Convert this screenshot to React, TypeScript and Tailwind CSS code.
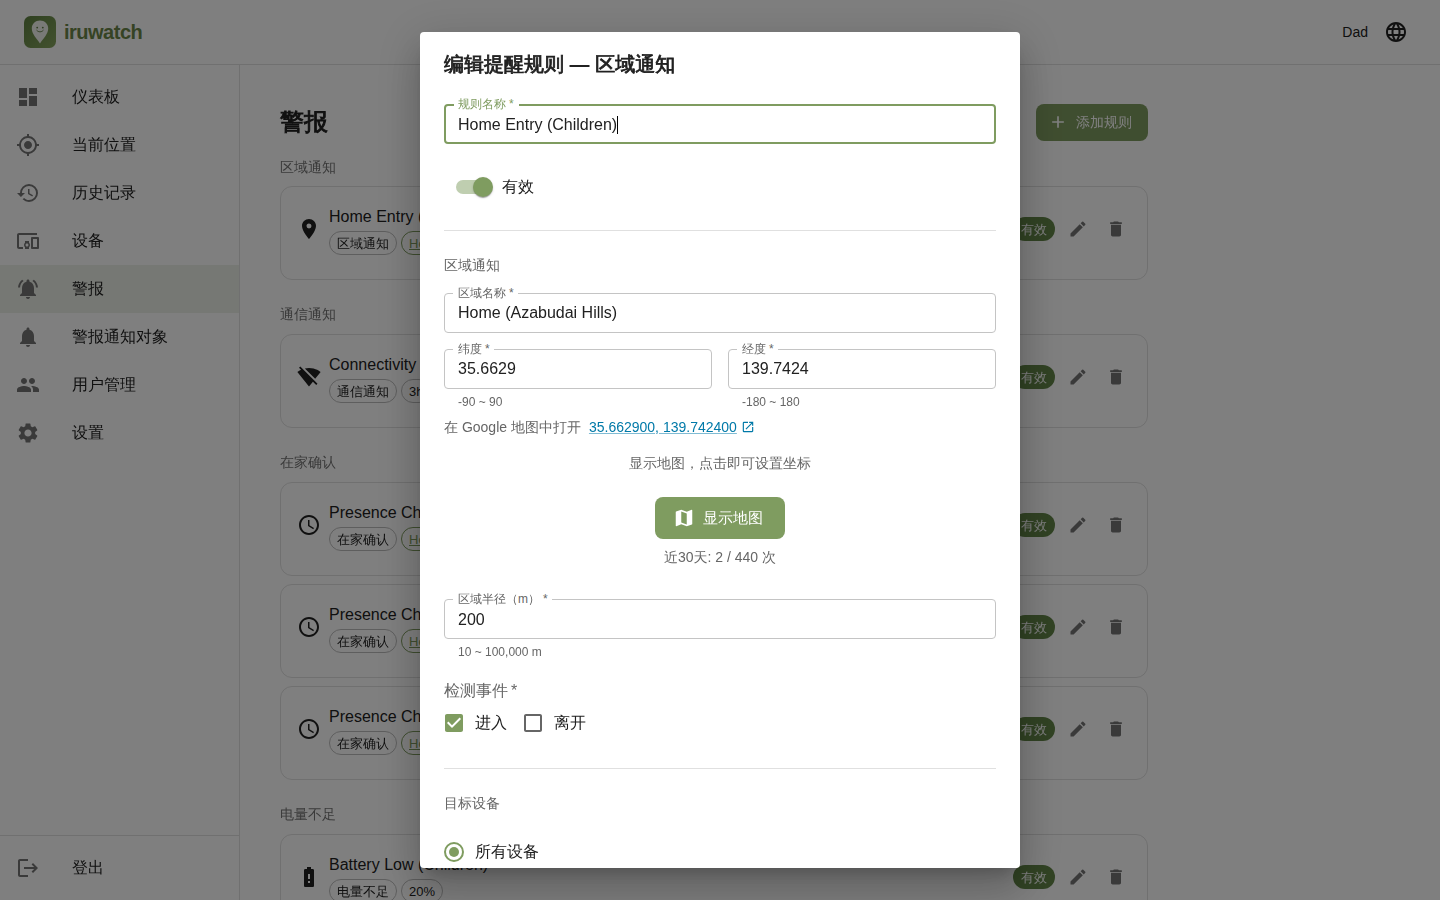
import type { ReactNode } from 'react'
import type { IconType } from 'react-icons'
import {
  MdAccessTime, MdAdd, MdBatteryAlert, MdDashboard, MdDelete, MdDevicesOther, MdEdit, MdHistory,
  MdLanguage, MdLocationOn, MdMap, MdMyLocation, MdNotifications, MdNotificationsActive,
  MdOpenInNew, MdPeople, MdSettings, MdSignalWifiOff,
} from 'react-icons/md'

type Rule = { title: string; type: string; tag: string; zone?: boolean; icon: IconType }

const NAV: { label: string; icon: IconType; active?: boolean }[] = [
  { label: '仪表板', icon: MdDashboard },
  { label: '当前位置', icon: MdMyLocation },
  { label: '历史记录', icon: MdHistory },
  { label: '设备', icon: MdDevicesOther },
  { label: '警报', icon: MdNotificationsActive, active: true },
  { label: '警报通知对象', icon: MdNotifications },
  { label: '用户管理', icon: MdPeople },
  { label: '设置', icon: MdSettings },
]

const presence: Rule = { title: 'Presence Check', type: '在家确认', tag: 'Home', zone: true, icon: MdAccessTime }

const SECTIONS: { name: string; rules: Rule[] }[] = [
  { name: '区域通知', rules: [{ title: 'Home Entry (Children)', type: '区域通知', tag: 'Home', zone: true, icon: MdLocationOn }] },
  { name: '通信通知', rules: [{ title: 'Connectivity', type: '通信通知', tag: '3h', icon: MdSignalWifiOff }] },
  { name: '在家确认', rules: [presence, presence, presence] },
  { name: '电量不足', rules: [{ title: 'Battery Low (Children)', type: '电量不足', tag: '20%', icon: MdBatteryAlert }] },
]

function Logo() {
  return (
    <svg viewBox="0 0 32 32" className="size-8">
      <defs>
        <linearGradient id="leaf" x1="0" y1="0" x2="1" y2="1">
          <stop offset="0" stopColor="#5d8040" />
          <stop offset="1" stopColor="#86a45e" />
        </linearGradient>
      </defs>
      <rect width="32" height="32" rx="6.5" fill="url(#leaf)" />
      <path d="M16 4.600c-4.600 0-8.200 3.500-8.200 8 0 5.300 4.900 10.300 8.200 14.800 3.300-4.500 8.200-9.500 8.200-14.800 0-4.500-3.600-8-8.200-8z" fill="#f2f4ee" />
      <circle cx="13.200" cy="11.600" r="0.900" fill="#5d7a42" />
      <circle cx="18.800" cy="11.600" r="0.900" fill="#5d7a42" />
      <path d="M12.800 14.400c1.700 2 4.700 2 6.400 0" fill="none" stroke="#5d7a42" strokeWidth="0.900" strokeLinecap="round" />
    </svg>
  )
}

function LogoutIcon() {
  return (
    <svg viewBox="0 0 24 24" className="size-6" fill="currentColor">
      <path d="m17 7-1.410 1.410L18.170 11H8v2h10.170l-2.580 2.580L17 17l5-5zM4 5h8V3H4c-1.100 0-2 .9-2 2v14c0 1.100.9 2 2 2h8v-2H4z" />
    </svg>
  )
}

function NavItem({ label, active, children }: { label: string; active?: boolean; children: ReactNode }) {
  return (
    <div className={`flex h-12 items-center px-4 ${active ? 'bg-[#ecf0e8]' : ''}`}>
      <span className="w-14 text-[#757575]">{children}</span>
      <span>{label}</span>
    </div>
  )
}

function RuleCard({ rule }: { rule: Rule }) {
  const Icon = rule.icon
  return (
    <div className="flex h-[94px] rounded-xl border border-[#e0e0e0] pt-4 pr-3 pb-6 pl-4">
      <div className="flex flex-1 items-center gap-2">
        <Icon className="size-6" />
        <div className="flex flex-col gap-1">
          <div className="h-6 leading-[28px]">{rule.title}</div>
          <div className="flex gap-1 text-[13px] leading-5">
            <span className="flex h-6 items-center rounded-full border border-[#bdbdbd] px-[7px] pt-0.5">{rule.type}</span>
            <span className={`flex h-6 items-center rounded-full border px-[7px] pt-0.5 ${rule.zone ? 'border-[#7f9c60] text-[#7f9c60] underline' : 'border-[#bdbdbd]'}`}>{rule.tag}</span>
          </div>
        </div>
      </div>
      <div className="flex items-center text-[#757575]">
        <span className="mr-1 flex h-6 items-center rounded-full bg-[#638648] px-2 pt-0.5 text-[13px] leading-5 text-white">有效</span>
        <span className="p-[9px]"><MdEdit className="size-5" /></span>
        <span className="p-[9px]"><MdDelete className="size-5" /></span>
      </div>
    </div>
  )
}

function Field({ label, value, focused, low, helper }: { label: string; value: string; focused?: boolean; low?: boolean; helper?: string }) {
  return (
    <div className="flex-1">
      <div className={`relative flex h-10 items-center rounded border ${focused ? 'border-2 border-[#7f9c60] px-3' : 'border-[#c4c4c4] px-[13px]'} ${focused || low ? 'pt-0.5' : ''}`}>
        <span className={`absolute bg-white text-xs leading-4 whitespace-nowrap ${focused ? '-top-[10px] left-2 pr-[5px] pl-1 text-[#7f9c60]' : '-top-[9px] left-2 pr-1 pl-[5px] text-[#666666]'}`}>
          {label}<span className="ml-[3px]">*</span>
        </span>
        <span>{value}</span>
        {focused && <span className="h-[18px] w-px bg-black" />}
      </div>
      {helper && <div className="mt-[3px] ml-3.5 text-xs leading-5 text-[#666666]">{helper}</div>}
    </div>
  )
}

function Dialog() {
  return (
    <div className="fixed inset-0 flex items-center justify-center bg-black/50">
      <div className="flex h-[836px] w-[600px] flex-col overflow-hidden rounded bg-white px-6 shadow-[0_11px_15px_-7px_rgba(0,0,0,0.2),0_24px_38px_3px_rgba(0,0,0,0.14),0_9px_46px_8px_rgba(0,0,0,0.12)]">
        <h2 className="h-16 shrink-0 text-xl leading-[64px] font-bold">
          <span className="[-webkit-text-stroke:0.8px]">编辑提醒规则</span> — <span className="[-webkit-text-stroke:0.8px]">区域通知</span>
        </h2>
        <div className="mt-2 flex flex-col">
          <Field label="规则名称" value="Home Entry (Children)" focused />
          <div className="mt-6 flex h-[38px] items-center pl-3">
            <span className="flex h-3.5 w-[34px] items-center justify-end rounded-full bg-[#bfceb0]">
              <span className="-mr-[3px] size-5 shrink-0 rounded-full bg-[#7f9c60] shadow-[0_2px_1px_-1px_rgba(0,0,0,0.2),0_1px_1px_rgba(0,0,0,0.14),0_1px_3px_rgba(0,0,0,0.12)]" />
            </span>
            <span className="ml-3">有效</span>
          </div>
          <div className="mt-6 h-px bg-[#e0e0e0]" />
          <div className="mt-6 h-[22px] text-sm leading-5 text-[#666666]">区域通知</div>
          <div className="mt-4 flex"><Field label="区域名称" value="Home (Azabudai Hills)" /></div>
          <div className="mt-4 flex gap-4">
            <Field label="纬度" value="35.6629" helper="-90 ~ 90" />
            <Field label="经度" value="139.7424" helper="-180 ~ 180" />
          </div>
          <div className="mt-[5px] flex h-5 items-center text-sm text-[#666666]">
            <span>在 Google 地图中打开</span>
            <span className="ml-2 leading-5 text-[#0079a8] underline decoration-[#80bcd4] underline-offset-1">35.662900, 139.742400</span>
            <MdOpenInNew className="ml-1 size-3.5 text-[#0079a8]" />
          </div>
          <div className="mt-4 text-center text-sm leading-5 text-[#666666]">显示地图，点击即可设置坐标</div>
          <div className="mt-6 flex h-[42px] w-[130px] items-center self-center rounded-lg bg-[#7f9c60] pl-[18px] text-[15px] text-white">
            <MdMap className="size-[22px]" />
            <span className="ml-2">显示地图</span>
          </div>
          <div className="mt-2 text-center text-sm leading-5 text-[#666666]">近30天: 2 / 440 次</div>
          <div className="mt-8 flex"><Field label="区域半径（m）" value="200" low helper="10 ~ 100,000 m" /></div>
          <div className="mt-[17px] h-6 leading-6 text-[#666666]">检测事件<span className="ml-[3px]">*</span></div>
          <div className="flex h-10 items-center">
            <svg viewBox="0 0 24 24" className="-ml-0.5 size-6" fill="#7f9c60"><path d="M19 3H5c-1.110 0-2 .9-2 2v14c0 1.100.89 2 2 2h14c1.110 0 2-.9 2-2V5c0-1.100-.89-2-2-2zm-9 14l-5-5 1.410-1.410L10 14.170l7.590-7.590L19 8l-9 9z" /></svg>
            <span className="ml-[9px]">进入</span>
            <svg viewBox="0 0 24 24" className="ml-3.5 size-6" fill="#666666"><path d="M19 5v14H5V5h14m0-2H5c-1.100 0-2 .9-2 2v14c0 1.100.9 2 2 2h14c1.100 0 2-.9 2-2V5c0-1.100-.9-2-2-2z" /></svg>
            <span className="ml-[9px]">离开</span>
          </div>
          <div className="mt-[25px] h-px bg-[#e0e0e0]" />
          <div className="mt-6 h-[22px] text-sm leading-5 text-[#666666]">目标设备</div>
          <div className="mt-[17px] flex h-10 items-center">
            <span className="flex size-5 items-center justify-center rounded-full border-2 border-[#7f9c60]">
              <span className="size-2.5 rounded-full bg-[#7f9c60]" />
            </span>
            <span className="ml-[11px]">所有设备</span>
          </div>
        </div>
      </div>
    </div>
  )
}

export default function App() {
  return (
    <div className="flex h-screen flex-col overflow-hidden bg-white font-['Liberation_Sans','WenQuanYi_Zen_Hei','Droid_Sans_Fallback',sans-serif] text-base text-[#212121]">
      <header className="flex h-[65px] shrink-0 items-center border-b border-[#e0e0e0] pr-8 pl-6">
        <Logo />
        <span className="ml-2 text-xl font-bold tracking-[-0.5px] text-[#6b8649]">iruwatch</span>
        <span className="mr-4 ml-auto text-sm">Dad</span>
        <MdLanguage className="size-6" />
      </header>
      <div className="flex min-h-0 flex-1">
        <nav className="flex w-60 shrink-0 flex-col border-r border-[#e0e0e0]">
          <div className="flex-1 pt-2">
            {NAV.map(({ label, icon: Icon, active }) => (
              <NavItem key={label} label={label} active={active}><Icon className="size-6" /></NavItem>
            ))}
          </div>
          <div className="border-t border-[#e0e0e0] py-2">
            <NavItem label="登出"><LogoutIcon /></NavItem>
          </div>
        </nav>
        <main className="w-[908px] overflow-hidden pt-[39px] pl-10">
          <div className="flex h-[37px] items-center justify-between">
            <h1 className="pb-0.5 text-2xl font-bold [-webkit-text-stroke:0.9px]">警报</h1>
            <div className="flex h-full w-28 items-center rounded-lg bg-[#7f9c60] pb-px pl-3 text-sm text-white">
              <MdAdd className="size-5" />
              <span className="ml-2">添加规则</span>
            </div>
          </div>
          <div className="flex flex-col gap-6 pt-[15px]">
            {SECTIONS.map((section) => (
              <section key={section.name} className="leading-5 first:leading-[22px]">
                <div className="mb-2 h-[22px] text-[14px] text-[#757575]">{section.name}</div>
                <div className="flex flex-col gap-2">
                  {section.rules.map((rule, i) => <RuleCard key={i} rule={rule} />)}
                </div>
              </section>
            ))}
          </div>
        </main>
      </div>
      <Dialog />
    </div>
  )
}
